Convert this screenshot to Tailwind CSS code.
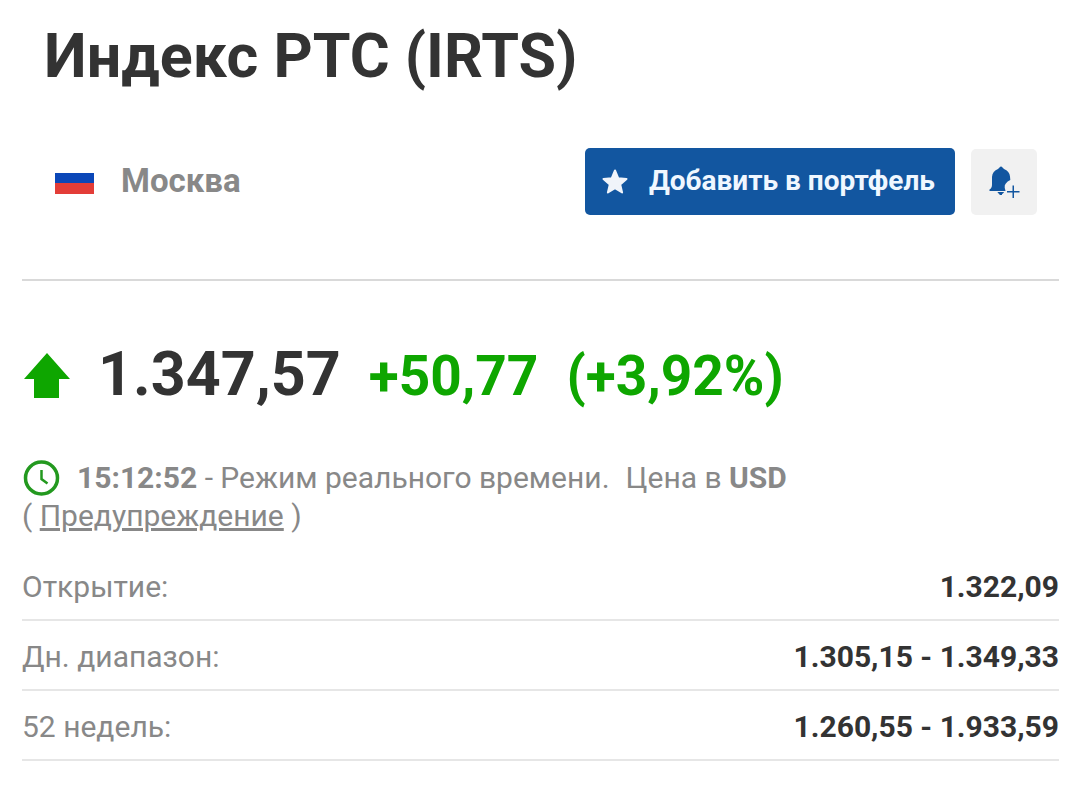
<!DOCTYPE html>
<html lang="ru">
<head>
  <meta charset="UTF-8">
  <meta name="viewport" content="width=device-width, initial-scale=1">
  <title>Индекс РТС (IRTS)</title>
  <script src="https://cdn.jsdelivr.net/npm/@tailwindcss/browser@4"></script>
</head>
<body class="bg-white font-['Roboto',sans-serif] text-[#333333]">
<main class="pl-[22px] pr-[21px]">
  <h1 class="px-[22px] pt-5 text-[61px] leading-[72px] font-bold">Индекс РТС (IRTS)</h1>

  <!-- Exchange and actions -->
  <div class="flex items-center justify-between mt-14 pl-[33px] pr-[22px]">
    <div class="flex items-center gap-[27px]">
      <svg class="w-[39px] h-8" viewBox="0 0 39 32">
        <rect y="7" width="39" height="11" fill="#0b47b8"/>
        <rect y="17" width="39" height="11" fill="#e33d38"/>
      </svg>
      <span class="pb-0.5 text-[33px] leading-10 font-bold text-[#888888]">Москва</span>
    </div>
    <div class="flex items-end gap-4">
      <button class="flex items-center h-[67px] pl-[17px] pr-5 gap-[21px] rounded-[5px] bg-[#1256a0] text-[#f0f7ff] text-[28px] font-bold">
        <svg class="w-[26px] h-[26px]" viewBox="0 0 26 26" fill="#f0f4fa" stroke="#f0f4fa" stroke-width="2" stroke-linejoin="round"><path d="M13 1.500l3.200 7.700 8.300.7-6.300 5.500 1.900 8.100-7.100-4.300-7.100 4.300 1.900-8.100L1.500 9.900l8.300-.7z"/></svg>
        <span class="pb-0.5">Добавить в портфель</span>
      </button>
      <button class="flex items-center justify-center w-[66px] h-[66px] rounded-[5px] bg-[#f1f1f1]" aria-label="Создать уведомление">
        <svg class="w-8 h-8" viewBox="0 0 32 32" fill="#1256a0">
          <path d="M13 0.500c1 0 2 1.500 3 2.500 3.500 1.200 5.800 4 6 7.500l.3 3.500c-4 2-6 4.500-5.600 7.500.1 1 .6 2 .8 3.500H1.500v-1.500c1.800-1 2.500-2.500 2.500-5v-7.500C4.200 7 6.500 4.200 10 3c1-1 2-2.500 3-2.500z"/>
          <path d="M9.500 26h6.500c-.4 1.200-1.200 1.700-2 2v1h-2.500v-1c-.8-.3-1.600-.8-2-2z"/>
          <path d="M24.500 19.500H26V25h5.500v1.500H26V32h-1.500v-5.500H19V25h5.500z"/>
        </svg>
      </button>
    </div>
  </div>

  <!-- Quote -->
  <div class="mt-16 pt-14 border-t-2 border-[#d9d9d9]">
    <div class="flex items-center font-bold">
      <svg class="w-12 h-12" viewBox="0 0 48 48" fill="#0ea600"><path d="M25 1l23 26H37v19H12V27H2z"/></svg>
      <span class="self-start ml-7 text-[61px] leading-[74px]">1.347,57</span>
      <span class="ml-7 text-[55px] leading-[78px] text-[#0ea600]">+50,77</span>
      <span class="ml-7 text-[55px] leading-[78px] text-[#0ea600]">(+3,92%)</span>
    </div>
  </div>

  <div class="mt-11 text-[30px] leading-[38px] text-[#888888]">
    <div class="flex items-center">
      <svg class="w-[38px] h-[38px]" viewBox="0 0 38 38" fill="none" stroke="#23991f" stroke-width="3.500"><circle cx="19.500" cy="19" r="16"/><path d="M19.500 11v9l6 4.500" stroke-width="2.500"/></svg>
      <span class="ml-[17px]"><b>15:12:52</b> - Режим реального времени.</span>
      <span class="ml-4">Цена в <b>USD</b></span>
    </div>
    <p>( <a href="#" class="underline decoration-[3px]">Предупреждение</a> )</p>
  </div>

  <!-- Summary -->
  <dl class="mt-4 text-[30px] leading-9">
    <div class="flex justify-between pt-[18px] pb-[14px] border-b-2 border-[#e6e6e6]">
      <dt class="text-[#888888]">Открытие:</dt>
      <dd class="font-bold">1.322,09</dd>
    </div>
    <div class="flex justify-between pt-[18px] pb-[14px] border-b-2 border-[#e6e6e6]">
      <dt class="text-[#888888]">Дн. диапазон:</dt>
      <dd class="font-bold">1.305,15 - 1.349,33</dd>
    </div>
    <div class="flex justify-between pt-[18px] pb-[14px] border-b-2 border-[#e6e6e6]">
      <dt class="text-[#888888]">52 недель:</dt>
      <dd class="font-bold">1.260,55 - 1.933,59</dd>
    </div>
  </dl>
</main>
</body>
</html>
